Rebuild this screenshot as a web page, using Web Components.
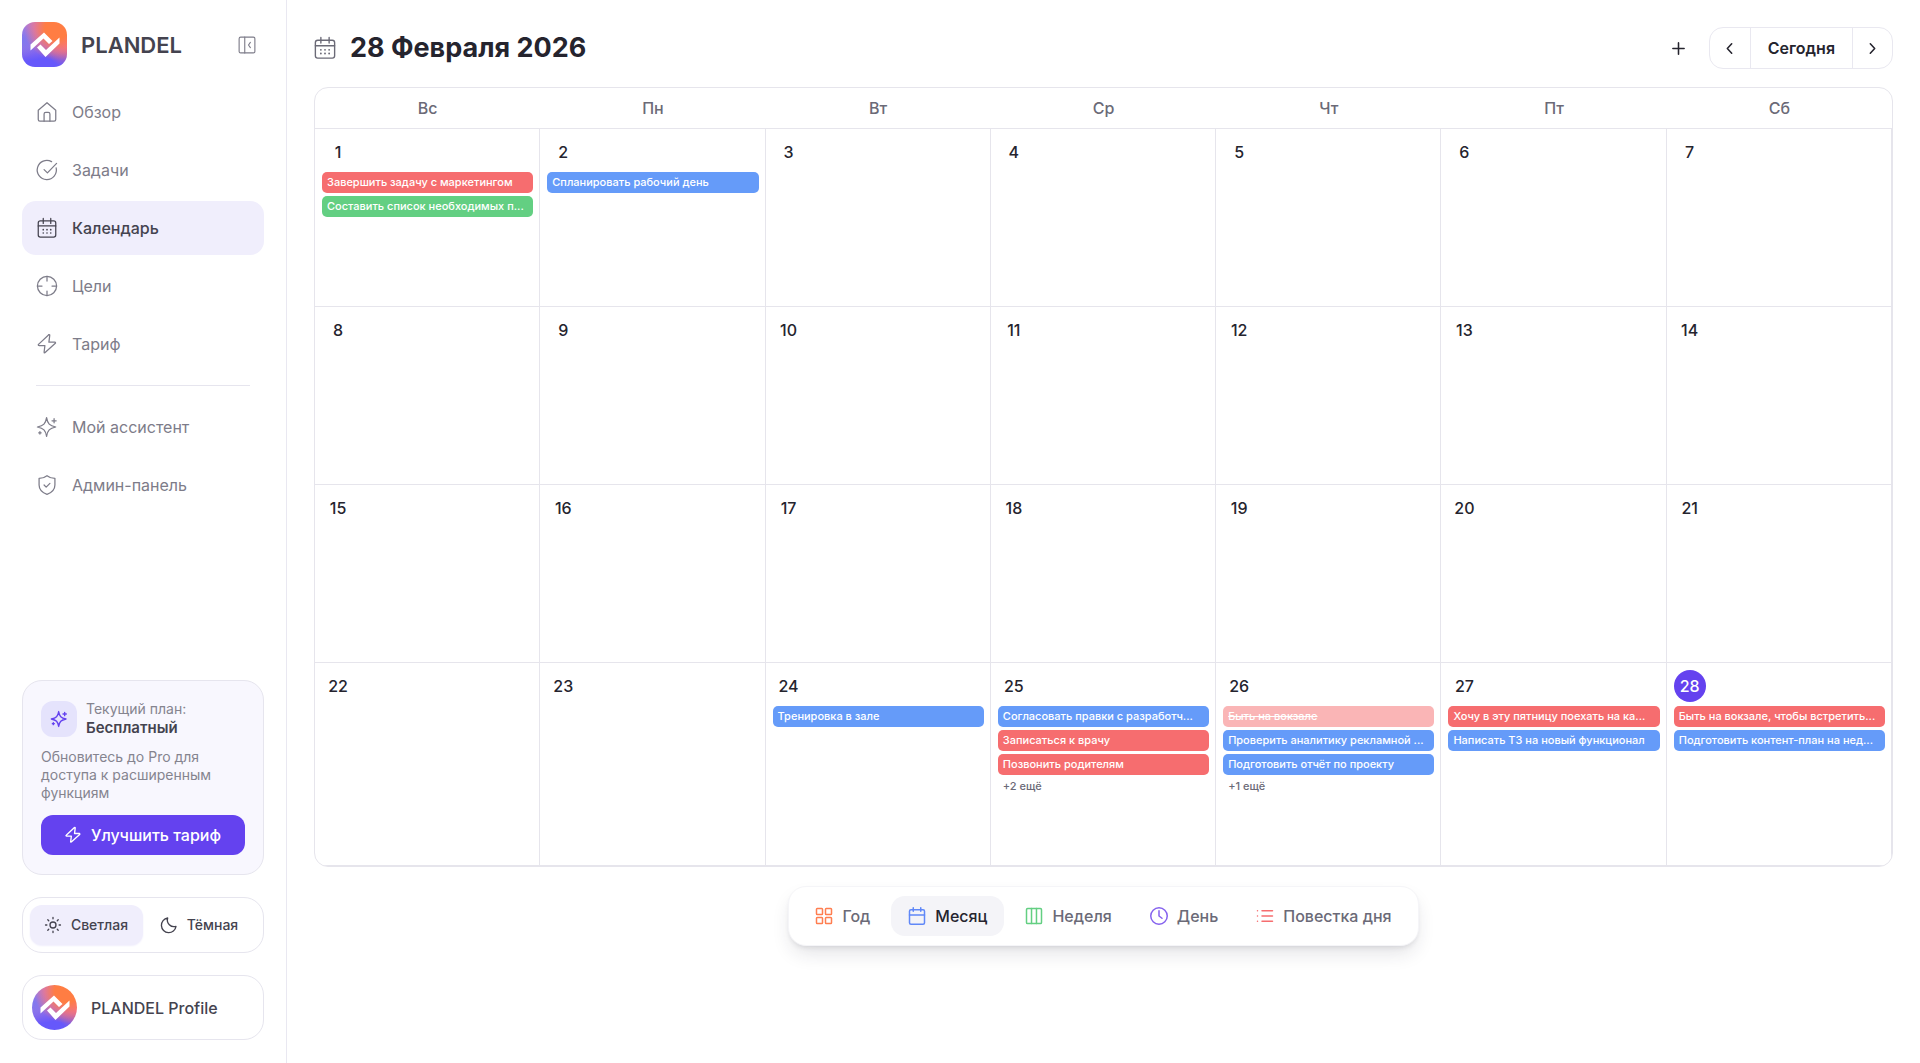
<!DOCTYPE html>
<html lang="ru">
<head>
<meta charset="utf-8">
<title>PLANDEL</title>
<style>
	body {
		margin: 0;
		background: #fff;
		color: #25242e;
		font: 500 16px/20px Inter, "Liberation Sans", sans-serif;
	}
</style>
</head>
<body>
<plandel-app></plandel-app>

<script>
(() => {
	/* アイコン (24×24, 線画) */
	const ICONS = {
		home: '<path d="M1.500 9.800 12 .8l10.500 9V21a2 2 0 0 1-2 2h-17a2 2 0 0 1-2-2z"/><path d="M8.500 23v-8.500a2 2 0 0 1 2-2h3a2 2 0 0 1 2 2V23"/>',
		check: '<path d="M23 9.500A11.500 11.500 0 1 1 17.500 2"/><path d="m8.500 11.500 4 4L23.500 4"/>',
		calendar: '<rect x="1.500" y="3.500" width="21" height="19.500" rx="2.500"/><path d="M1.500 9.500h21M7.500 .5v6M16.500 .5v6"/><path d="M7.500 14h.01M12 14h.01M16.500 14h.01M7.500 18h.01M12 18h.01M16.500 18h.01" stroke-width="2"/>',
		target: '<circle cx="12" cy="12" r="11.500"/><path d="M12 .5V6M12 18v5.500M.5 12H6M18 12h5.500"/>',
		bolt: '<path d="M13.800 1.200 1.800 12.400a.8.8 0 0 0 .5 1.400h7.200l-1 8.300a.5.5 0 0 0 .9.400L22 11.200a.8.8 0 0 0-.5-1.400h-7.200l1-8.200a.6.6 0 0 0-1.500-.4z"/>',
		sparkle: '<path d="M11.500.8c1.200 7.200 3.500 9.700 11 11.200-7.500 1.500-9.800 4-11 11.200C10.300 16 8 13.500.5 12 8 10.500 10.300 8 11.500.8z"/><path d="M20.500 2v5M18 4.500h5M3.500 17.500v3M2 19h3"/>',
		shield: '<path d="M12 .8c2.800 2.200 6 3.200 9.500 3.200v8c0 5.500-3.500 9-9.500 11.200C6 21 2.500 17.500 2.500 12V4C6 4 9.200 3 12 .8z"/><path d="m8.500 12 2.500 2.500L15.500 10"/>',
		collapse: '<rect x="1.500" y="1.500" width="21" height="21" rx="2"/><path d="M9 1.500v21M16.500 8.500 14 12l2.500 3.500"/>',
		sun: '<circle cx="12" cy="12" r="4.500"/><path d="M12 .8v2M12 21.200v2M.8 12h2M21.200 12h2M4.200 4.200l1.400 1.400M18.400 18.400l1.400 1.400M4.200 19.800l1.400-1.400M18.400 5.600l1.400-1.400"/>',
		moon: '<path d="M10 1.500a10 10 0 0 0 12.500 12.500A11 11 0 1 1 10 1.500z"/>',
		plus: '<path d="M12 3v18M3 12h18"/>',
		left: '<path d="m15.500 4.500-7 7.500 7 7.500"/>',
		right: '<path d="m8.500 4.500 7 7.500-7 7.500"/>',
		grid: '<rect x="2" y="2" width="8" height="8" rx="1"/><rect x="14" y="2" width="8" height="8" rx="1"/><rect x="2" y="14" width="8" height="8" rx="1"/><rect x="14" y="14" width="8" height="8" rx="1"/>',
		month: '<rect x="2" y="3.500" width="20" height="19.500" rx="2"/><path d="M2 10.500h20M7 1v4.500M17 1v4.500"/>',
		columns: '<rect x="2" y="2" width="20" height="20" rx="1.500"/><path d="M8.700 2v20M15.300 2v20"/>',
		clock: '<circle cx="12" cy="12" r="11"/><path d="M12 5v7l4 3"/>',
		list: '<path d="M8 5h14M8 12h14M8 19h14M2 5h.01M2 12h.01M2 19h.01"/>',
	};

	/**
	 * <pl-icon name="アイコン名">
	 */
	class PlIcon extends HTMLElement {
		constructor() {
			super();

			this.attachShadow({mode: 'open'}).innerHTML = `
				<style>
					:host {
						display: inline-block;
						flex: none;
						width: var(--icon-size, 20px);
						height: var(--icon-size, 20px);
					}
					svg {
						display: block;
						width: 100%;
						height: 100%;
						overflow: visible;
						fill: none;
						stroke: currentColor;
						stroke-width: var(--icon-stroke, 1.5);
						stroke-linecap: round;
						stroke-linejoin: round;
					}
				</style>
				<svg viewBox="0 0 24 24" aria-hidden="true">${ICONS[this.getAttribute('name')]}</svg>
			`;
		}
	}

	/**
	 * <pl-logo round> round を指定すると円形になる
	 */
	class PlLogo extends HTMLElement {
		constructor() {
			super();

			this.attachShadow({mode: 'open'}).innerHTML = `
				<style>
					:host {
						display: block;
						flex: none;
						width: 45px;
						height: 45px;
						border-radius: 13px;
						background:
							radial-gradient(circle at 76% 14%, #ff7d43 0 22%, #ff777199 42%, transparent 62%),
							radial-gradient(circle at 104% 48%, #ff7474, transparent 46%),
							radial-gradient(circle at 0 40%, #7d78f0, transparent 34%),
							linear-gradient(170deg, #ae7bdc 20%, #9670e6 50%, #6658fb 76%);
					}
					:host([round]) {
						border-radius: 50%;
					}
					svg {
						display: block;
					}
				</style>
				<svg viewBox="0 0 45 45" width="45" height="45" fill="#fff" aria-hidden="true">
					<path d="M8.500 28.500v-6L22 10.500l8.500 8.500-3.500 3-5.500-5.500z"/>
					<path d="M37.500 15.500V21.500L23.500 35 15 25.500l3.500-3 5.500 5.500z"/>
				</svg>
			`;
		}
	}

	/**
	 * <pl-nav-item icon="アイコン名" current>ラベル</pl-nav-item>
	 */
	class PlNavItem extends HTMLElement {
		constructor() {
			super();

			this.attachShadow({mode: 'open'}).innerHTML = `
				<style>
					:host {
						display: block;
					}
					a {
						display: flex;
						align-items: center;
						gap: 15px;
						height: 54px;
						padding: 0 15px;
						border-radius: 14px;
						color: #7d7c89;
						font-weight: 400;
						text-decoration: none;
					}
					:host([current]) a {
						background: #f0eefc;
						color: #44434f;
						font-weight: 500;
					}
				</style>
				<a href="#"><pl-icon name="${this.getAttribute('icon')}"></pl-icon><slot></slot></a>
			`;
		}
	}

	class PlPlanCard extends HTMLElement {
		constructor() {
			super();

			this.attachShadow({mode: 'open'}).innerHTML = `
				<style>
					:host {
						display: block;
						padding: 19px 18px;
						border: 1px solid #e6e5ee;
						border-radius: 20px;
						background: #f8f7fe;
						color: #85848f;
						font-size: 14px;
						font-weight: 400;
						line-height: 18px;
					}
					.plan {
						display: flex;
						align-items: center;
						gap: 9px;
					}
					.badge {
						display: grid;
						place-items: center;
						width: 36px;
						height: 36px;
						border-radius: 12px;
						background: #e5e3fc;
						color: #6442ef;
						--icon-size: 16px;
						--icon-stroke: 2;
					}
					strong {
						display: block;
						color: #44434f;
						font-size: 15px;
						font-weight: 600;
						line-height: 20px;
					}
					p {
						margin: 10px 0 13px;
					}
					button {
						display: flex;
						align-items: center;
						justify-content: center;
						gap: 10px;
						width: 100%;
						height: 40px;
						border: 0;
						border-radius: 12px;
						background: #6442ef;
						color: #fff;
						font: 500 16px/20px Inter, sans-serif;
						--icon-size: 16px;
						--icon-stroke: 2;
					}
				</style>
				<div class="plan">
					<span class="badge"><pl-icon name="sparkle"></pl-icon></span>
					<div>Текущий план:<strong>Бесплатный</strong></div>
				</div>
				<p>Обновитесь до Pro для доступа к расширенным функциям</p>
				<button type="button"><pl-icon name="bolt"></pl-icon>Улучшить тариф</button>
			`;
		}
	}

	class PlThemeSwitch extends HTMLElement {
		constructor() {
			super();

			this.attachShadow({mode: 'open'}).innerHTML = `
				<style>
					:host {
						display: flex;
						padding: 7px;
						border: 1px solid #e6e5ee;
						border-radius: 20px;
						--icon-size: 16px;
						--icon-stroke: 2;
					}
					button {
						display: flex;
						flex: 1;
						align-items: center;
						justify-content: center;
						gap: 10px;
						height: 40px;
						padding: 0;
						border: 0;
						border-radius: 12px;
						background: none;
						color: #44434f;
						font: 500 14px/20px Inter, sans-serif;
					}
					button[aria-pressed="true"] {
						background: #f0eefc;
						box-shadow: 0 1px 2px #f0eefc;
					}
				</style>
				<button type="button" aria-pressed="true"><pl-icon name="sun"></pl-icon>Светлая</button>
				<button type="button" aria-pressed="false"><pl-icon name="moon"></pl-icon>Тёмная</button>
			`;

			this.shadowRoot.addEventListener('click', (ev) => {
				const target = ev.target.closest('button');
				if (target === null) {
					return;
				}
				for (const button of this.shadowRoot.querySelectorAll('button')) {
					button.setAttribute('aria-pressed', button === target);
				}
			});
		}
	}

	class PlSidebar extends HTMLElement {
		constructor() {
			super();

			this.attachShadow({mode: 'open'}).innerHTML = `
				<style>
					:host {
						display: flex;
						flex-direction: column;
						box-sizing: border-box;
						width: 287px;
						padding: 22px 22px 23px;
						border-right: 1px solid #e9e8f1;
					}
					header {
						display: flex;
						align-items: center;
						gap: 14px;
						margin-bottom: 18px;
						color: #44434f;
						font-size: 22px;
						font-weight: 600;
					}
					header button {
						display: flex;
						margin-left: auto;
						padding: 8px;
						border: 0;
						background: none;
						color: #7d7c89;
						--icon-size: 18px;
					}
					nav {
						display: grid;
						gap: 4px;
					}
					hr {
						width: calc(100% - 28px);
						box-sizing: border-box;
						margin: 10px auto;
						border: 0;
						border-top: 1px solid #e6e5ee;
					}
					footer {
						display: grid;
						gap: 22px;
						margin-top: auto;
					}
					.profile {
						display: flex;
						align-items: center;
						gap: 14px;
						padding: 9px;
						border: 1px solid #e6e5ee;
						border-radius: 20px;
						color: #44434f;
						text-decoration: none;
					}
				</style>
				<header>
					<pl-logo></pl-logo>PLANDEL
					<button type="button" aria-label="Свернуть меню"><pl-icon name="collapse"></pl-icon></button>
				</header>
				<nav>
					<pl-nav-item icon="home">Обзор</pl-nav-item>
					<pl-nav-item icon="check">Задачи</pl-nav-item>
					<pl-nav-item icon="calendar" current>Календарь</pl-nav-item>
					<pl-nav-item icon="target">Цели</pl-nav-item>
					<pl-nav-item icon="bolt">Тариф</pl-nav-item>
					<hr>
					<pl-nav-item icon="sparkle">Мой ассистент</pl-nav-item>
					<pl-nav-item icon="shield">Админ-панель</pl-nav-item>
				</nav>
				<footer>
					<pl-plan-card></pl-plan-card>
					<pl-theme-switch></pl-theme-switch>
					<a class="profile" href="#"><pl-logo round></pl-logo>PLANDEL Profile</a>
				</footer>
			`;
		}
	}

	class PlToolbar extends HTMLElement {
		constructor() {
			super();

			this.attachShadow({mode: 'open'}).innerHTML = `
				<style>
					:host {
						display: flex;
						align-items: center;
					}
					.icon {
						color: #6b6a77;
						--icon-size: 22px;
					}
					h1 {
						flex: 1;
						margin: 0 0 0 14px;
						font-size: 27px;
						font-weight: 700;
						line-height: 34px;
					}
					button {
						display: grid;
						place-items: center;
						min-width: 40px;
						height: 40px;
						padding: 0;
						border: 0;
						background: none;
						color: inherit;
						font: 600 16px/20px Inter, sans-serif;
						--icon-size: 15px;
						--icon-stroke: 2.500;
					}
					.group {
						display: flex;
						margin-left: 10px;
						border: 1px solid #e9e8f0;
						border-radius: 14px;
					}
					.group button + button {
						border-left: 1px solid #e9e8f0;
					}
					.group .today {
						padding: 0 17px;
					}
				</style>
				<pl-icon class="icon" name="calendar"></pl-icon>
				<h1>28 Февраля 2026</h1>
				<button type="button" aria-label="Добавить"><pl-icon name="plus"></pl-icon></button>
				<div class="group">
					<button type="button" aria-label="Назад"><pl-icon name="left"></pl-icon></button>
					<button type="button" class="today">Сегодня</button>
					<button type="button" aria-label="Вперёд"><pl-icon name="right"></pl-icon></button>
				</div>
			`;
		}
	}

	/**
	 * <pl-event color="red|green|blue" done>название</pl-event>
	 */
	class PlEvent extends HTMLElement {
		constructor() {
			super();

			this.attachShadow({mode: 'open'}).innerHTML = `
				<style>
					:host {
						display: block;
						overflow: hidden;
						height: 21px;
						margin-bottom: 3px;
						padding: 0 5px;
						border-radius: 5px;
						background: #659bf9;
						color: #fff;
						font-size: 11px;
						font-weight: 500;
						line-height: 21px;
						text-overflow: ellipsis;
						white-space: nowrap;
					}
					:host([color="red"]) {
						background: #f66d6f;
					}
					:host([color="green"]) {
						background: #63cf82;
					}
					:host([done]) {
						opacity: .5;
						text-decoration: line-through;
					}
				</style>
				<slot></slot>
			`;
		}
	}

	const WEEKDAYS = ['Вс', 'Пн', 'Вт', 'Ср', 'Чт', 'Пт', 'Сб'];
	const TODAY = 28;
	const EVENTS = {
		1: [['red', 'Завершить задачу с маркетингом'], ['green', 'Составить список необходимых п...']],
		2: [['blue', 'Спланировать рабочий день']],
		24: [['blue', 'Тренировка в зале']],
		25: [['blue', 'Согласовать правки с разработч...'], ['red', 'Записаться к врачу'], ['red', 'Позвонить родителям']],
		26: [['red', 'Быть на вокзале', 'done'], ['blue', 'Проверить аналитику рекламной ...'], ['blue', 'Подготовить отчёт по проекту']],
		27: [['red', 'Хочу в эту пятницу поехать на ка...'], ['blue', 'Написать ТЗ на новый функционал']],
		28: [['red', 'Быть на вокзале, чтобы встретить...'], ['blue', 'Подготовить контент-план на нед...']],
	};
	const MORE = {25: 2, 26: 1};

	class PlMonth extends HTMLElement {
		constructor() {
			super();

			const cell = (day) => {
				const events = (EVENTS[day] || []).map(([color, title, done = '']) => `<pl-event color="${color}" ${done}>${title}</pl-event>`).join('');
				const more = MORE[day] ? `<a href="#">+${MORE[day]} ещё</a>` : '';
				return `<td><time${day === TODAY ? ' class="today"' : ''}>${day}</time>${events}${more}</td>`;
			};

			let rows = '';
			for (let first = 1; first <= 28; first += 7) {
				rows += `<tr>${WEEKDAYS.map((_, i) => cell(first + i)).join('')}</tr>`;
			}

			this.attachShadow({mode: 'open'}).innerHTML = `
				<style>
					:host {
						display: block;
						overflow: hidden;
						border: 1px solid #e6e5ec;
						border-radius: 14px;
					}
					table {
						width: 100%;
						border-spacing: 0;
						table-layout: fixed;
					}
					th {
						height: 40px;
						padding: 0;
						border-bottom: 1px solid #e6e5ec;
						color: #6b6a77;
						font-weight: 500;
					}
					td {
						box-sizing: border-box;
						height: 178px;
						padding: 7px 6px 7px 7px;
						border-right: 1px solid #e6e5ec;
						border-bottom: 1px solid #e6e5ec;
						vertical-align: top;
					}
					tr:last-child td {
						height: 203px;
					}
					time {
						display: block;
						width: 32px;
						margin-bottom: 4px;
						border-radius: 50%;
						line-height: 32px;
						text-align: center;
					}
					.today {
						background: #6442ef;
						color: #fff;
					}
					a {
						display: block;
						padding: 0 5px;
						color: #6b6a77;
						font-size: 11px;
						line-height: 16px;
						text-decoration: none;
					}
				</style>
				<table>
					<thead><tr>${WEEKDAYS.map((name) => `<th scope="col">${name}</th>`).join('')}</tr></thead>
					<tbody>${rows}</tbody>
				</table>
			`;
		}
	}

	class PlViewDock extends HTMLElement {
		constructor() {
			super();

			this.attachShadow({mode: 'open'}).innerHTML = `
				<style>
					:host {
						display: flex;
						gap: 4px;
						padding: 9px;
						border: 1px solid #f5f5f8;
						border-radius: 18px;
						background: #fff;
						box-shadow: 0 10px 20px -4px #25243a24, 0 3px 5px -2px #25243a20;
						--icon-size: 18px;
						--icon-stroke: 2;
					}
					button {
						display: flex;
						align-items: center;
						gap: 9px;
						height: 40px;
						padding: 0 17px;
						border: 0;
						border-radius: 14px;
						background: none;
						color: #6b6a77;
						font: 500 16px/20px Inter, sans-serif;
					}
					button[aria-pressed="true"] {
						background: #f4f4f8;
						color: #25242e;
					}
				</style>
				<button type="button" aria-pressed="false"><pl-icon name="grid" style="color: #ff7e50"></pl-icon>Год</button>
				<button type="button" aria-pressed="true"><pl-icon name="month" style="color: #6088f8"></pl-icon>Месяц</button>
				<button type="button" aria-pressed="false"><pl-icon name="columns" style="color: #63cf82"></pl-icon>Неделя</button>
				<button type="button" aria-pressed="false"><pl-icon name="clock" style="color: #8663ee"></pl-icon>День</button>
				<button type="button" aria-pressed="false"><pl-icon name="list" style="color: #f66d6f"></pl-icon>Повестка дня</button>
			`;
		}
	}

	class PlandelApp extends HTMLElement {
		constructor() {
			super();

			this.attachShadow({mode: 'open'}).innerHTML = `
				<style>
					:host {
						display: grid;
						grid-template-columns: auto 1fr;
						min-height: 100vh;
					}
					main {
						display: flex;
						flex-direction: column;
						min-width: 0;
						padding: 27px 27px 0;
					}
					pl-month {
						margin: 18px 0 19px;
					}
					pl-view-dock {
						align-self: center;
					}
				</style>
				<pl-sidebar></pl-sidebar>
				<main>
					<pl-toolbar></pl-toolbar>
					<pl-month></pl-month>
					<pl-view-dock></pl-view-dock>
				</main>
			`;
		}
	}

	customElements.define('pl-icon', PlIcon);
	customElements.define('pl-logo', PlLogo);
	customElements.define('pl-nav-item', PlNavItem);
	customElements.define('pl-plan-card', PlPlanCard);
	customElements.define('pl-theme-switch', PlThemeSwitch);
	customElements.define('pl-sidebar', PlSidebar);
	customElements.define('pl-toolbar', PlToolbar);
	customElements.define('pl-event', PlEvent);
	customElements.define('pl-month', PlMonth);
	customElements.define('pl-view-dock', PlViewDock);
	customElements.define('plandel-app', PlandelApp);
})();
</script>
</body>
</html>
